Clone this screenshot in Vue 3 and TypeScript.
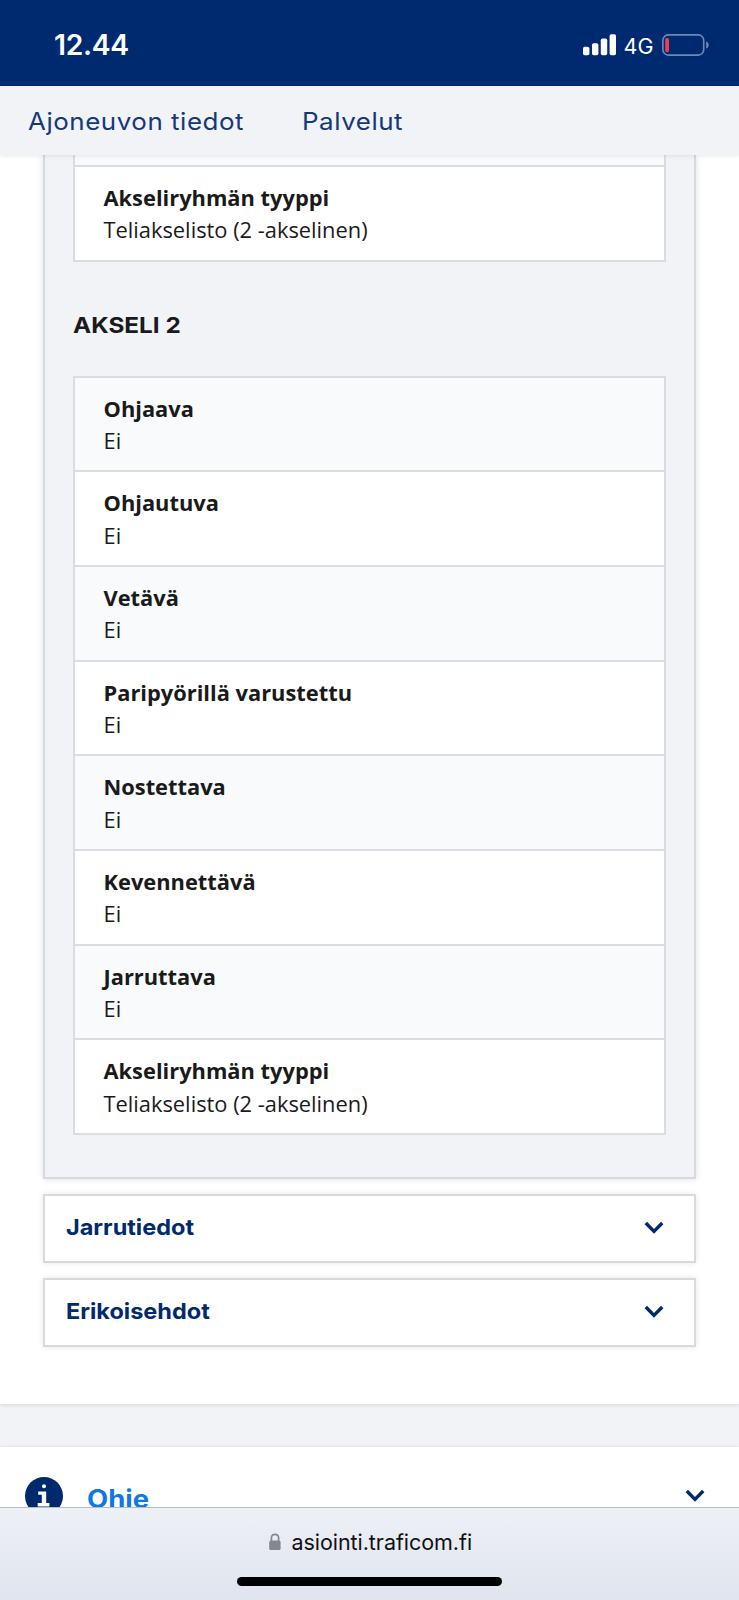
<script setup lang="ts">
interface Row {
  label: string
  value: string
}

const navItems: string[] = ['Ajoneuvon tiedot', 'Palvelut']

const axleRows: Row[] = [
  { label: 'Ohjaava', value: 'Ei' },
  { label: 'Ohjautuva', value: 'Ei' },
  { label: 'Vetävä', value: 'Ei' },
  { label: 'Paripyörillä varustettu', value: 'Ei' },
  { label: 'Nostettava', value: 'Ei' },
  { label: 'Kevennettävä', value: 'Ei' },
  { label: 'Jarruttava', value: 'Ei' },
  { label: 'Akseliryhmän tyyppi', value: 'Teliakselisto (2 -akselinen)' },
]

const lastRow: Row = axleRows[axleRows.length - 1]
const sections: string[] = ['Jarrutiedot', 'Erikoisehdot']
</script>

<template>
  <div class="screen">
    <header class="status">
      <span class="time">12.44</span>
      <div class="indicators">
        <svg class="signal" width="34" height="22" viewBox="0 0 34 22" fill="#fff">
          <rect x="0" y="12.7" width="6.4" height="8.6" rx="1.7" />
          <rect x="9" y="9.3" width="6.4" height="12" rx="1.7" />
          <rect x="17.8" y="4.6" width="6.4" height="16.7" rx="1.7" />
          <rect x="26.6" y="0.3" width="6.4" height="21" rx="1.7" />
        </svg>
        <span class="network">4G</span>
        <svg class="battery" width="48" height="22" viewBox="0 0 48 22">
          <rect x="0.9" y="0.9" width="40.8" height="20.2" rx="5.4" fill="none" stroke="#7188b5" stroke-width="1.6" />
          <rect x="3.2" y="3.9" width="3.8" height="14.4" rx="1.8" fill="#ec3f4f" />
          <path d="M44.2 7.6 C47.6 8.8 47.6 13.4 44.2 14.6 Z" fill="#7188b5" />
        </svg>
      </div>
    </header>

    <nav class="nav">
      <a v-for="item in navItems" :key="item" class="nav-link">{{ item }}</a>
    </nav>

    <main class="page">
      <section class="card">
        <div class="panel">
          <dl class="table table-end">
            <div class="sliver"></div>
            <div class="row plain">
              <dt>{{ lastRow.label }}</dt>
              <dd>{{ lastRow.value }}</dd>
            </div>
          </dl>
          <h3 class="axle-title">AKSELI 2</h3>
          <dl class="table">
            <div v-for="row in axleRows" :key="row.label" class="row">
              <dt>{{ row.label }}</dt>
              <dd>{{ row.value }}</dd>
            </div>
          </dl>
        </div>
        <button v-for="name in sections" :key="name" class="accordion" type="button">
          <span class="accordion-name">{{ name }}</span>
          <svg width="20" height="14" viewBox="0 0 20 14" fill="none" stroke="#002a6c" stroke-width="3.4">
            <path d="M1.8 2 L10 10.4 L18.2 2" />
          </svg>
        </button>
      </section>

      <section class="help">
        <svg class="info" width="38" height="38" viewBox="0 0 38 38">
          <circle cx="19" cy="19" r="19" fill="#002a6c" />
          <circle cx="19" cy="9.2" r="2" fill="#fff" />
          <path d="M13.2 14.6 H21.2 V26 H24.4 V29.4 H12.7 V26 H16.8 V17.8 H13.2 Z" fill="#fff" />
        </svg>
        <span class="help-name">Ohje</span>
        <svg class="help-chevron" width="20" height="14" viewBox="0 0 20 14" fill="none" stroke="#002a6c" stroke-width="3.4">
          <path d="M1.8 2 L10 10.4 L18.2 2" />
        </svg>
      </section>
    </main>

    <footer class="browser">
      <div class="address">
        <svg width="12" height="18" viewBox="0 0 12 18">
          <path d="M2.4 8.5 V5 C2.4 0.1 9.6 0.1 9.6 5 V8.5" fill="none" stroke="#85868f" stroke-width="1.7" />
          <rect x="0.2" y="7.4" width="11.4" height="9.6" rx="1.6" fill="#85868f" />
        </svg>
        <span class="url">asiointi.traficom.fi</span>
      </div>
      <div class="home"></div>
    </footer>
  </div>
</template>

<style>
body {
  margin: 0;
}
</style>

<style scoped>
.screen {
  display: flex;
  flex-direction: column;
  width: 739px;
  height: 1600px;
  overflow: hidden;
  background: #fff;
  color: #1a1a1b;
  font-family: "Open Sans", "Noto Sans", sans-serif;
}

.status {
  flex: none;
  display: flex;
  align-items: center;
  justify-content: space-between;
  box-sizing: border-box;
  height: 86px;
  padding: 3px 29px 0 54px;
  background: #002a70;
  color: #fff;
  font-family: Inter, sans-serif;
}

.time {
  font-size: 28.3px;
  font-weight: 600;
  letter-spacing: -0.3px;
}

.indicators {
  display: flex;
  align-items: center;
}

.network {
  margin: 2px 8.5px 0 6.5px;
  font-size: 21.5px;
  font-weight: 400;
}

.nav {
  position: relative;
  z-index: 1;
  flex: none;
  display: flex;
  align-items: center;
  gap: 74px;
  box-sizing: border-box;
  height: 69px;
  padding: 1px 0 0 28px;
  background: #f1f3f7;
  box-shadow: 0 1px 4px rgba(0, 0, 0, 0.09);
}

.nav-link {
  color: #14387c;
  font-family: Inter, sans-serif;
  font-size: 24px;
  font-weight: 400;
  letter-spacing: 0.5px;
  transform: scaleX(1.08);
  transform-origin: left;
}

.page {
  flex: none;
  height: 1352px;
  overflow: hidden;
  background: #f1f3f7;
}

.card {
  box-sizing: border-box;
  height: 1249px;
  padding: 0 43px;
  background: #fff;
  box-shadow: 0 1px 4px rgba(0, 0, 0, 0.12);
}

.panel {
  box-sizing: border-box;
  height: 1024px;
  padding: 0 28px;
  border: 2px solid #d6d9dd;
  border-top: 0;
  background: #f1f3f7;
  box-shadow: 0 0 6px rgba(0, 0, 0, 0.13);
}

.table {
  margin: 0;
  border: 2px solid #d9dce0;
  border-top-width: 0;
}

.table-end .sliver {
  height: 10px;
  background: #f8fafc;
}

.row {
  box-sizing: border-box;
  height: 94.66px;
  padding: 15px 28.5px 0;
  border-top: 2px solid #d9dce0;
  background: #fff;
}

.row:nth-child(odd) {
  background: #f8fafc;
}

.row.plain {
  background: #fff;
}

dt,
dd {
  margin: 0;
  height: 32.3px;
  font-size: 21.85px;
  line-height: 32.3px;
  white-space: nowrap;
}

dt {
  font-weight: 700;
}

.axle-title {
  width: max-content;
  margin: 0;
  height: 114px;
  font-family: Inter, sans-serif;
  font-size: 22px;
  font-weight: 700;
  line-height: 127px;
  transform: scaleX(1.105);
  transform-origin: left;
}

.accordion {
  display: flex;
  align-items: center;
  justify-content: space-between;
  box-sizing: border-box;
  width: 100%;
  height: 69px;
  margin: 15px 0 0;
  padding: 0 30px 2px 20.5px;
  border: 2px solid #d6d9dd;
  background: #fff;
  box-shadow: 0 0 6px rgba(0, 0, 0, 0.1);
}

.accordion-name {
  margin-bottom: 2px;
  color: #002a6c;
  font-family: Inter, sans-serif;
  font-size: 22px;
  font-weight: 700;
  transform: scaleX(1.067);
  transform-origin: left;
}

.help {
  display: flex;
  align-items: flex-start;
  height: 80px;
  margin-top: 43px;
  padding: 30px 34px 0 25px;
  background: #fff;
  box-shadow: 0 0 3px rgba(0, 0, 0, 0.12);
}

.info {
  flex: none;
}

.help-name {
  margin-left: 24px;
  padding-top: 5px;
  color: #0f78e6;
  font-family: Inter, sans-serif;
  font-size: 25px;
  font-weight: 700;
  line-height: 34px;
  transform: scaleX(1.1);
  transform-origin: left;
}

.help-chevron {
  margin: 12px 0 0 auto;
}

.browser {
  position: relative;
  z-index: 1;
  flex: 1;
  display: flex;
  flex-direction: column;
  align-items: center;
  box-sizing: border-box;
  border-top: 1px solid #b9bdc3;
  background: linear-gradient(#edf0f5, #e0e4ee);
}

.address {
  display: flex;
  align-items: center;
  gap: 10.5px;
  box-sizing: border-box;
  height: 69px;
  margin-left: 2px;
  padding-bottom: 2px;
}

.url {
  color: #101114;
  font-family: Inter, sans-serif;
  font-size: 21.5px;
  letter-spacing: -0.05px;
}

.home {
  width: 265px;
  height: 9px;
  border-radius: 5px;
  background: #000;
}
</style>
